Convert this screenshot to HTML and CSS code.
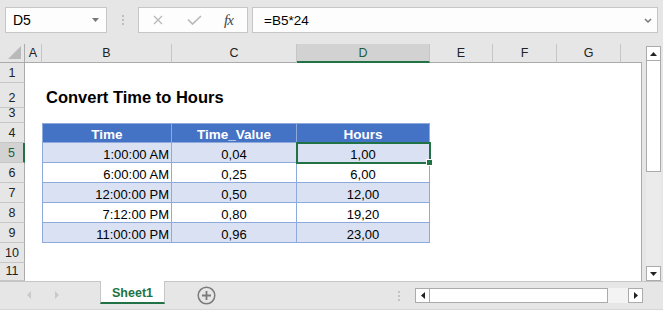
FILE: index.html
```html
<!DOCTYPE html>
<html>
    <head>
        <title>Convert Time to Hours</title>
        <meta charset="utf-8"/>
        <link rel="stylesheet" href="styles.css">
    </head>
    <body>
        <div class="toolbar">
            <div class="namebox">
                <span>D5</span>
                <svg width="7" height="4" viewBox="0 0 7 4"><path d="M0 0H7L3.5 4Z" fill="#777"/></svg>
            </div>
            <div class="grip"></div>
            <div class="fxbtns">
                <svg class="cancel" width="10" height="10" viewBox="0 0 10 10"><path d="M1 1L9 9M9 1L1 9" stroke="#b9b9b9" stroke-width="1.3"/></svg>
                <svg class="enter" width="15" height="10" viewBox="0 0 15 10"><path d="M1 4.5L5.5 9L14 1" stroke="#b9b9b9" stroke-width="1.7" fill="none"/></svg>
                <span class="fx">fx</span>
            </div>
            <div class="formula">
                <span>=B5*24</span>
                <svg width="8" height="5" viewBox="0 0 8 5"><path d="M1 1L4 4L7 1" stroke="#7a7a7a" stroke-width="1.5" fill="none"/></svg>
            </div>
        </div>

        <div class="main">
            <div class="sheet">
                <div class="cells"></div>
                <div class="corner"><svg width="13" height="13" viewBox="0 0 13 13"><path d="M13 0V13H0Z" fill="#b9b9b9"/></svg></div>
                <div class="colhead">A</div>
                <div class="colhead">B</div>
                <div class="colhead">C</div>
                <div class="colhead on">D</div>
                <div class="colhead">E</div>
                <div class="colhead">F</div>
                <div class="colhead">G</div>
                <div class="colhead last"></div>

                <div class="rowhead">1</div>
                <div class="rowhead">2</div>
                <div class="rowhead">3</div>
                <div class="rowhead">4</div>
                <div class="rowhead on">5</div>
                <div class="rowhead">6</div>
                <div class="rowhead">7</div>
                <div class="rowhead">8</div>
                <div class="rowhead">9</div>
                <div class="rowhead">10</div>
                <div class="rowhead">11</div>

                <div class="title">Convert Time to Hours</div>

                <div class="tbl">
                    <div class="tr">
                        <div class="th">Time</div><div class="th">Time_Value</div><div class="th">Hours</div>
                    </div>
                    <div class="tr band">
                        <div class="td r">1:00:00 AM</div><div class="td">0,04</div><div class="td">1,00</div>
                    </div>
                    <div class="tr">
                        <div class="td r">6:00:00 AM</div><div class="td">0,25</div><div class="td">6,00</div>
                    </div>
                    <div class="tr band">
                        <div class="td r">12:00:00 PM</div><div class="td">0,50</div><div class="td">12,00</div>
                    </div>
                    <div class="tr">
                        <div class="td r">7:12:00 PM</div><div class="td">0,80</div><div class="td">19,20</div>
                    </div>
                    <div class="tr band">
                        <div class="td r">11:00:00 PM</div><div class="td">0,96</div><div class="td">23,00</div>
                    </div>
                </div>

                <div class="sel"></div>
            </div>

            <div class="vscroll">
                <div class="sbtn"><svg width="7" height="4" viewBox="0 0 7 4"><path d="M0 4H7L3.5 0Z" fill="#222"/></svg></div>
                <div class="vthumb"></div>
                <div class="vtrack"></div>
                <div class="sbtn"><svg width="7" height="4" viewBox="0 0 7 4"><path d="M0 0H7L3.5 4Z" fill="#222"/></svg></div>
            </div>
        </div>

        <div class="tabbar">
            <div class="tabnav">
                <svg width="4" height="8" viewBox="0 0 4 8"><path d="M4 0V8L0 4Z" fill="#c9c9c9"/></svg>
                <svg width="4" height="8" viewBox="0 0 4 8"><path d="M0 0V8L4 4Z" fill="#c9c9c9"/></svg>
            </div>
            <div class="tab">Sheet1</div>
            <div class="addsheet">
                <svg width="19" height="19" viewBox="0 0 19 19"><circle cx="9.5" cy="9.5" r="8.3" stroke="#7b7b7b" stroke-width="1.5" fill="none"/><path d="M9.5 5V14M5 9.5H14" stroke="#7b7b7b" stroke-width="1.8"/></svg>
            </div>
            <div class="hgrip"></div>
            <div class="hscroll">
                <div class="sbtn"><svg width="4" height="7" viewBox="0 0 4 7"><path d="M4 0V7L0 3.5Z" fill="#222"/></svg></div>
                <div class="hthumb"></div>
                <div class="htrack"></div>
                <div class="sbtn"><svg width="4" height="7" viewBox="0 0 4 7"><path d="M0 0V7L4 3.5Z" fill="#222"/></svg></div>
            </div>
        </div>
    </body>
</html>
```

FILE: styles.css
```css
*{
    margin: 0;
    padding: 0;
}
body{
    width: 663px;
    height: 310px;
    overflow: hidden;
    background-color: #e6e6e6;
    font-family: "Liberation Sans", Arial, sans-serif;
    color: #000;
}
svg{
    display: block;
}

/* formula bar */
.toolbar{
    height: 44px;
    display: flex;
    align-items: flex-start;
    padding: 7px 0 0 5px;
    box-sizing: border-box;
}
.namebox,.fxbtns,.formula{
    height: 26px;
    box-sizing: border-box;
    background-color: #fdfdfd;
    border: 1px solid #c6c6c6;
    display: flex;
    align-items: center;
}
.namebox{
    width: 102px;
    justify-content: space-between;
    padding: 0 7px 0 7px;
    font-size: 14px;
}
.grip{
    width: 2px;
    height: 10px;
    margin: 8px 14px 0 15px;
    background: repeating-linear-gradient(#bdbdbd 0 2px, transparent 2px 4px);
}
.fxbtns{
    width: 110px;
    padding-left: 14px;
}
.fxbtns .enter{
    margin-left: 24px;
}
.fxbtns .fx{
    margin-left: 22px;
    font-family: "Liberation Serif", serif;
    font-style: italic;
    font-size: 15px;
    color: #444;
    letter-spacing: -1px;
}
.formula{
    flex: 1;
    margin: 0 5px 0 4px;
    padding: 0 5px 0 11px;
    justify-content: space-between;
    font-size: 13.5px;
}

/* grid */
.main{
    display: flex;
    height: 237px;
}
.sheet{
    width: 642px;
    display: grid;
    grid-template-columns: 25px 17px 130px 125px 133px 63px 64px 64px 21px;
    grid-template-rows: 19px 20px 25px 15px 20px 20px 20px 20px 20px 20px 20px 18px;
}
.cells{
    grid-column: 2 / -1;
    grid-row: 2 / -1;
    background-color: #fff;
    border-right: 1px solid #ababab;
}
.corner{
    grid-column: 1;
    grid-row: 1;
    border-right: 1px solid #ababab;
    border-bottom: 1px solid #ababab;
    display: flex;
    align-items: flex-end;
    justify-content: flex-end;
    padding: 0 3px 3px 0;
}
.colhead{
    grid-row: 1;
    border-right: 1px solid #c6c6c6;
    border-bottom: 1px solid #ababab;
    display: flex;
    align-items: flex-end;
    justify-content: center;
    padding-bottom: 2px;
    font-size: 12.5px;
    color: #222;
}
.colhead.last{
    border-right: 0;
}
.colhead.on{
    background-color: #d2d2d2;
    border-bottom: 2px solid #217346;
    color: #1f5e3c;
    padding-bottom: 1px;
}
.rowhead{
    grid-column: 1;
    border-right: 1px solid #ababab;
    border-bottom: 1px solid #c6c6c6;
    display: flex;
    align-items: flex-end;
    justify-content: center;
    padding-bottom: 2px;
    font-size: 12.5px;
    color: #222;
}
.rowhead.on{
    background-color: #d2d2d2;
    border-right: 2px solid #217346;
    color: #1f5e3c;
}
.title{
    grid-column: 3 / 6;
    grid-row: 3;
    align-self: end;
    padding: 0 0 1px 4px;
    font-size: 16.5px;
    font-weight: bold;
}

/* table */
.tbl{
    grid-column: 3 / 6;
    grid-row: 5 / 11;
    display: grid;
    grid-template-columns: 129px 125px 133px;
    grid-template-rows: 19px repeat(5, 20px);
    border-left: 1px solid #8ea9db;
    border-top: 1px solid #8ea9db;
}
.tr{
    display: contents;
}
.th,.td{
    border-right: 1px solid #8ea9db;
    border-bottom: 1px solid #8ea9db;
    display: flex;
    align-items: flex-end;
    justify-content: center;
    font-size: 13px;
}
.th{
    background-color: #4472c4;
    color: #fff;
    font-weight: bold;
    font-size: 13.5px;
}
.td.r{
    justify-content: flex-end;
    padding-right: 2px;
}
.band .td{
    background-color: #d9e1f2;
}
.sel{
    grid-column: 5;
    grid-row: 6;
    margin: -1px -1px -1px -1px;
    border: 2px solid #217346;
    position: relative;
}
.sel::after{
    content: "";
    position: absolute;
    right: -4px;
    bottom: -4px;
    width: 5px;
    height: 5px;
    background-color: #217346;
    border: 1px solid #fff;
}

/* scroll bars */
.sbtn{
    width: 15px;
    height: 15px;
    box-sizing: border-box;
    border: 1px solid #ababab;
    background-color: #fff;
    display: flex;
    align-items: center;
    justify-content: center;
}
.vscroll{
    width: 15px;
    margin-left: 4px;
    padding-top: 2px;
    display: flex;
    flex-direction: column;
}
.vthumb{
    height: 112px;
    margin-top: -1px;
    box-sizing: border-box;
    border: 1px solid #ababab;
    background-color: #fff;
}
.vtrack{
    flex: 1;
    background-color: #ebebeb;
}
.hscroll{
    width: 228px;
    height: 15px;
    margin: 6px 20px 0 0;
    display: flex;
}
.hthumb{
    width: 179px;
    margin-left: -1px;
    box-sizing: border-box;
    border: 1px solid #ababab;
    background-color: #fff;
}
.htrack{
    flex: 1;
    background-color: #f3f3f3;
}

/* sheet tabs */
.tabbar{
    height: 28px;
    border-top: 1px solid #c6c6c6;
    display: flex;
    align-items: flex-start;
    position: relative;
}
.tabbar::after{
    content: "";
    position: absolute;
    left: 0;
    right: 0;
    bottom: 0;
    height: 1px;
    background-color: #d6d6d6;
}
.tabnav{
    width: 100px;
    display: flex;
    padding: 9px 0 0 27px;
    box-sizing: border-box;
    gap: 24px;
}
.tab{
    width: 65px;
    height: 23px;
    margin-top: -1px;
    box-sizing: border-box;
    background-color: #fff;
    border-left: 1px solid #c6c6c6;
    border-right: 1px solid #c6c6c6;
    border-bottom: 2px solid #217346;
    display: flex;
    align-items: center;
    justify-content: center;
    padding-top: 2px;
    font-size: 12.5px;
    font-weight: bold;
    color: #217346;
}
.addsheet{
    margin: 4px 0 0 32px;
}
.hgrip{
    width: 2px;
    height: 10px;
    margin: 9px 15px 0 auto;
    background: repeating-linear-gradient(#c4c4c4 0 2px, transparent 2px 4px);
}
```
